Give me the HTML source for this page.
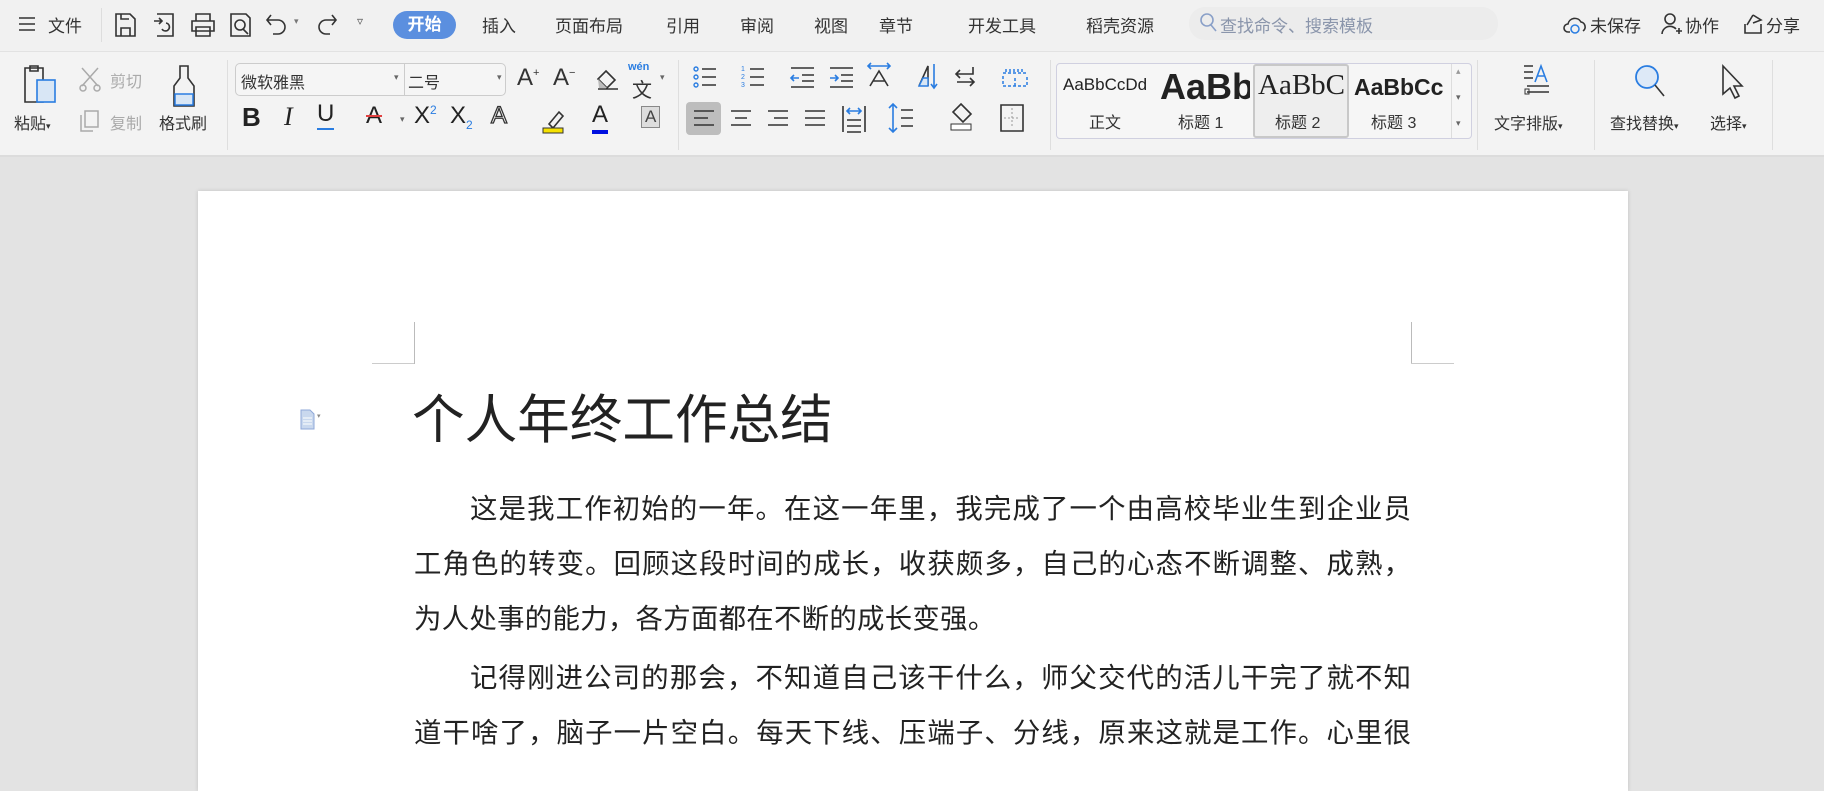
<!DOCTYPE html>
<html><head><meta charset="utf-8"><style>
*{margin:0;padding:0;box-sizing:border-box}
body{width:1824px;height:770px;overflow:hidden;position:relative;background:#e3e3e3;font-family:"Liberation Sans","Noto Sans CJK SC",sans-serif;color:#222}
.a{position:absolute;white-space:nowrap}
#top{position:absolute;left:0;top:0;width:1824px;height:52px;background:#f1f1f1;border-bottom:1px solid #e2e2e2}
#rib{position:absolute;left:0;top:52px;width:1824px;height:105px;background:#f3f3f3;border-bottom:2px solid #dcdcdc}
.tab{font-size:17px;top:12px;color:#333}
.lbl{font-size:16px;color:#333}
.sep{position:absolute;top:60px;width:1px;height:90px;background:#dedede}
svg{position:absolute;overflow:visible}
.ic{fill:none;stroke:#333;stroke-width:1.6}
.bl{stroke:#2a7de1}
#page{position:absolute;left:198px;top:191px;width:1430px;height:600px;background:#fff;box-shadow:0 0 4px rgba(0,0,0,.15)}
.l{position:absolute;left:216px;width:997px;font-size:27.4px;line-height:55px;height:55px;color:#222;text-align:justify;text-align-last:justify;white-space:nowrap;overflow:visible}
.in{left:272px;width:941px}
</style></head><body>
<div id="top">
<svg style="left:18px;top:16px" width="20" height="16"><path class="ic" d="M1 2h16M1 8h16M1 14h16"/></svg>
<span class="a tab" style="left:48px">文件</span>
<div class="a" style="left:101px;top:8px;width:1px;height:34px;background:#ddd"></div>
<svg style="left:114px;top:12px" width="24" height="26"><path class="ic" d="M2 2h14l5 5v17H2zM7 24v-8h9v8M7 2v5h8"/></svg>
<svg style="left:153px;top:12px" width="24" height="26"><path class="ic" d="M4 2h16v22H4M1 9h8M6 6l3 3-3 3M9 17a4 4 0 1 0 4-6"/></svg>
<svg style="left:190px;top:12px" width="26" height="26"><path class="ic" d="M6 9V2h14v7M2 9h22v10H2zM6 15h14v9H6z"/></svg>
<svg style="left:229px;top:12px" width="24" height="26"><path class="ic" d="M2 2h15l4 4v18H2z"/><circle class="ic" cx="11" cy="13" r="5"/><path class="ic" d="M14 17l5 5"/></svg>
<svg style="left:265px;top:12px" width="26" height="26"><path class="ic" d="M6 3L2 8l4 5M2 8h11a7 7 0 0 1 0 14H8"/></svg>
<span class="a" style="left:294px;top:16px;font-size:9px;color:#777">▾</span>
<svg style="left:316px;top:12px" width="24" height="26"><path class="ic" d="M16 3l4 5-4 5M20 8H10a7 7 0 0 0 0 14h4"/></svg>
<span class="a" style="left:357px;top:14px;font-size:12px;color:#555">▿</span>
<div class="a" style="left:393px;top:11px;width:63px;height:28px;border-radius:14px;background:#5b8fdf;color:#fff;font-size:17px;font-weight:bold;text-align:center;line-height:28px">开始</div>
<span class="a tab" style="left:482px">插入</span>
<span class="a tab" style="left:555px">页面布局</span>
<span class="a tab" style="left:666px">引用</span>
<span class="a tab" style="left:740px">审阅</span>
<span class="a tab" style="left:814px">视图</span>
<span class="a tab" style="left:879px">章节</span>
<span class="a tab" style="left:968px">开发工具</span>
<span class="a tab" style="left:1086px">稻壳资源</span>
<div class="a" style="left:1189px;top:7px;width:309px;height:33px;border-radius:16px;background:#ececec"></div>
<svg style="left:1199px;top:12px" width="20" height="22"><circle cx="8" cy="8" r="6" fill="none" stroke="#8aa0c8" stroke-width="1.6"/><path d="M12 13l5 6" stroke="#8aa0c8" stroke-width="1.6"/></svg>
<span class="a tab" style="left:1220px;color:#8a95ab">查找命令、搜索模板</span>
<svg style="left:1563px;top:12px" width="24" height="24"><path class="ic" d="M7 20H5a4 4 0 0 1 0-8 7 7 0 0 1 13-2 5 5 0 0 1 2 9"/><circle cx="12" cy="17" r="4" fill="none" stroke="#2a7de1" stroke-width="1.5"/></svg>
<span class="a tab" style="left:1590px">未保存</span>
<svg style="left:1661px;top:12px" width="22" height="24"><circle class="ic" cx="9" cy="7" r="5"/><path class="ic" d="M1 22a8 8 0 0 1 14-5M15 19h6M18 16v6"/></svg>
<span class="a tab" style="left:1685px">协作</span>
<svg style="left:1742px;top:12px" width="22" height="24"><path class="ic" d="M3 12v9h16v-9M11 3l-6 10M11 3l8 5-8 3"/></svg>
<span class="a tab" style="left:1766px">分享</span>
</div>
<div id="rib">
<svg style="left:23px;top:12px" width="36" height="40"><path class="ic" d="M2 4h18v34H2zM7 2h8v5H7z"/><rect x="14" y="16" width="18" height="22" fill="#d8e6f5" stroke="#2a7de1" stroke-width="1.6"/></svg>
<span class="a lbl" style="left:14px;top:58px">粘贴<small style="font-size:9px">▾</small></span>
<svg style="left:78px;top:14px" width="26" height="26"><path d="M4 2l16 18M20 2L4 20" stroke="#aaa" stroke-width="1.5"/><circle cx="5" cy="22" r="3" fill="none" stroke="#aaa" stroke-width="1.5"/><circle cx="19" cy="22" r="3" fill="none" stroke="#aaa" stroke-width="1.5"/></svg>
<span class="a lbl" style="left:110px;top:16px;color:#aaa">剪切</span>
<svg style="left:79px;top:57px" width="22" height="24"><path d="M6 2h13v16H6zM2 6v16h12" fill="none" stroke="#aaa" stroke-width="1.5"/></svg>
<span class="a lbl" style="left:110px;top:58px;color:#aaa">复制</span>
<svg style="left:170px;top:12px" width="28" height="44"><path class="ic" d="M10 2h8v12l6 8v20H4V22l6-8z"/><rect x="5" y="30" width="18" height="11" fill="#d8e6f5" stroke="#2a7de1" stroke-width="1.5"/></svg>
<span class="a lbl" style="left:159px;top:58px">格式刷</span>
<div class="sep" style="left:227px;top:8px"></div>
<div class="a" style="left:235px;top:11px;width:271px;height:33px;border:1px solid #ccc;border-radius:5px;background:#f5f5f5"></div>
<div class="a" style="left:404px;top:11px;width:1px;height:33px;background:#ccc"></div>
<span class="a lbl" style="left:241px;top:17px">微软雅黑</span>
<span class="a" style="left:394px;top:20px;font-size:9px;color:#666">▾</span>
<span class="a lbl" style="left:408px;top:17px">二号</span>
<span class="a" style="left:497px;top:20px;font-size:9px;color:#666">▾</span>
<span class="a" style="left:517px;top:12px;font-size:24px;color:#333">A<sup style="font-size:11px">+</sup></span>
<span class="a" style="left:553px;top:12px;font-size:24px;color:#333">A<sup style="font-size:11px">−</sup></span>
<svg style="left:595px;top:17px" width="26" height="22"><path class="ic" d="M11 2l9 9-8 8-9-9zM3 20h20"/><path d="M3 10l9 9 -8 0z" fill="#bbb"/></svg>
<span class="a" style="left:628px;top:9px;font-size:11px;color:#2a7de1;font-weight:bold">wén</span>
<span class="a" style="left:632px;top:22px;font-size:20px;color:#333">文</span>
<span class="a" style="left:660px;top:20px;font-size:9px;color:#666">▾</span>
<span class="a" style="left:242px;top:50px;font-size:26px;font-weight:bold">B</span>
<span class="a" style="left:284px;top:50px;font-size:26px;font-family:'Liberation Serif',serif;font-style:italic">I</span>
<span class="a" style="left:317px;top:48px;font-size:24px;border-bottom:2px solid #2a7de1;line-height:28px">U</span>
<span class="a" style="left:366px;top:50px;font-size:24px;line-height:28px;text-decoration:line-through;text-decoration-color:#e04040">A</span>
<span class="a" style="left:414px;top:50px;font-size:24px">X<sup style="font-size:12px;color:#2a7de1">2</sup></span>
<span class="a" style="left:450px;top:50px;font-size:24px">X<sub style="font-size:12px;color:#2a7de1">2</sub></span>
<span class="a" style="left:491px;top:50px;font-size:24px;color:#fff;-webkit-text-stroke:1.3px #333">A</span>
<svg style="left:541px;top:56px" width="24" height="26"><path class="ic" d="M8 16l10-12 4 4-10 12z"/><rect x="2" y="20" width="20" height="5" fill="#f5e100" stroke="#333"/></svg>
<span class="a" style="left:592px;top:48px;font-size:24px;line-height:30px;border-bottom:4px solid #0010e0">A</span>
<span class="a" style="left:641px;top:54px;font-size:17px;border:1px solid #888;background:#ddd;padding:0 3px;color:#444">A</span>
<span class="a" style="left:400px;top:62px;font-size:9px;color:#666">▾</span>
<div class="sep" style="left:678px;top:8px"></div>
<svg style="left:693px;top:14px" width="26" height="22"><circle cx="3" cy="3" r="2" fill="none" stroke="#2a7de1" stroke-width="1.4"/><circle cx="3" cy="11" r="2" fill="none" stroke="#2a7de1" stroke-width="1.4"/><circle cx="3" cy="19" r="2" fill="none" stroke="#2a7de1" stroke-width="1.4"/><path class="ic" d="M9 3h14M9 11h14M9 19h14"/></svg>
<svg style="left:741px;top:12px" width="26" height="24"><text x="0" y="7" font-size="7" fill="#2a7de1">1</text><text x="0" y="15" font-size="7" fill="#2a7de1">2</text><text x="0" y="23" font-size="7" fill="#2a7de1">3</text><path class="ic" d="M9 5h14M9 13h14M9 21h14"/></svg>
<svg style="left:790px;top:14px" width="26" height="22"><path class="ic" d="M1 2h23M12 9h12M12 15h12M1 21h23"/><path class="bl ic" d="M9 12H1M4 9l-3 3 3 3"/></svg>
<svg style="left:829px;top:14px" width="26" height="22"><path class="ic" d="M1 2h23M12 9h12M12 15h12M1 21h23"/><path class="bl ic" d="M1 12h8M6 9l3 3-3 3"/></svg>
<svg style="left:866px;top:10px" width="30" height="28"><path class="bl ic" d="M2 4h22M5 1l-3 3 3 3M21 1l3 3-3 3"/><path class="ic" d="M4 24l9-15 9 15M7 19h12"/></svg>
<svg style="left:916px;top:10px" width="26" height="30"><path class="ic" d="M3 24L12 4v20"/><path d="M3 24h9v-8h-5z" fill="#d8e6f5" stroke="#2a7de1" stroke-width="1.4"/><path class="bl ic" d="M18 2v24M15 22l3 4 3-4"/></svg>
<svg style="left:953px;top:14px" width="24" height="24"><path class="ic" d="M20 1v7H4M7 4L3 8l4 4M4 16h16M17 12l4 4-4 4"/></svg>
<svg style="left:1002px;top:16px" width="26" height="20"><path d="M1 5h24M4 1v4M8 1v4M12 1v4M16 1v4M20 1v4M1 8v10h24V8M13 10v8" fill="none" stroke="#2a7de1" stroke-width="1.5" stroke-dasharray="3 2"/></svg>
<div class="a" style="left:686px;top:50px;width:35px;height:33px;border-radius:4px;background:#bdbdbd"></div>
<svg style="left:693px;top:57px" width="24" height="20"><path class="ic" d="M1 2h20M1 9h14M1 16h20"/></svg>
<svg style="left:730px;top:57px" width="24" height="20"><path class="ic" d="M1 2h20M5 9h12M1 16h20"/></svg>
<svg style="left:767px;top:57px" width="24" height="20"><path class="ic" d="M1 2h20M7 9h14M1 16h20"/></svg>
<svg style="left:804px;top:57px" width="24" height="20"><path class="ic" d="M1 2h20M1 9h20M1 16h20"/></svg>
<svg style="left:841px;top:52px" width="26" height="30"><path class="ic" d="M2 2v26M24 2v26M6 16h14M6 22h14M6 28h14"/><path class="bl ic" d="M6 7h14M9 4L6 7l3 3M17 4l3 3-3 3"/></svg>
<svg style="left:887px;top:50px" width="30" height="34"><path class="bl ic" d="M6 2v28M2 6l4-4 4 4M2 26l4 4 4-4"/><path class="ic" d="M14 8h12M14 16h12M14 24h12"/></svg>
<svg style="left:949px;top:50px" width="26" height="32"><path class="ic" d="M12 2l10 10-8 8-10-10z"/><rect x="2" y="22" width="20" height="6" fill="#fff" stroke="#333"/></svg>
<svg style="left:1000px;top:52px" width="24" height="28"><path class="ic" d="M1 1h22v26H1z"/><path d="M12 4v20M4 14h16" stroke="#999" stroke-dasharray="2 2"/></svg>
<div class="sep" style="left:1050px;top:8px"></div>
<div class="a" style="left:1056px;top:11px;width:416px;height:76px;border:1px solid #d0d0e0;border-radius:4px;background:#f6f6f6"></div>
<div class="a" style="left:1253px;top:12px;width:96px;height:74px;border:2px solid #c8c8c8;border-radius:3px;background:#eee"></div>
<span class="a" style="left:1063px;top:23px;font-size:17px">AaBbCcDd</span>
<span class="a lbl" style="left:1089px;top:57px">正文</span>
<span class="a" style="left:1160px;top:14px;font-size:36px;font-weight:bold;width:90px;overflow:hidden">AaBb</span>
<span class="a lbl" style="left:1178px;top:57px">标题 1</span>
<span class="a" style="left:1258px;top:17px;font-size:29px;font-family:'Liberation Serif',serif;width:90px;overflow:hidden">AaBbC</span>
<span class="a lbl" style="left:1275px;top:57px">标题 2</span>
<span class="a" style="left:1354px;top:22px;font-size:23px;font-weight:bold;width:89px;overflow:hidden">AaBbCc</span>
<span class="a lbl" style="left:1371px;top:57px">标题 3</span>
<div class="a" style="left:1451px;top:12px;width:1px;height:74px;background:#ddd"></div>
<span class="a" style="left:1456px;top:14px;font-size:9px;color:#999">▴</span>
<span class="a" style="left:1456px;top:40px;font-size:9px;color:#666">▾</span>
<span class="a" style="left:1456px;top:66px;font-size:9px;color:#666">▾</span>
<div class="sep" style="left:1477px;top:8px"></div>
<svg style="left:1523px;top:12px" width="28" height="34"><path class="ic" d="M1 2h9M1 8h9M1 14h9M4 28h22M4 22h22"/><rect x="2" y="25" width="4" height="5" fill="none" stroke="#333"/><path class="bl ic" d="M12 18l6-16 6 16M14 12h8"/></svg>
<span class="a lbl" style="left:1494px;top:58px">文字排版<small style="font-size:9px">▾</small></span>
<div class="sep" style="left:1594px;top:8px"></div>
<svg style="left:1634px;top:12px" width="32" height="36"><circle cx="13" cy="13" r="11" fill="#dde9f7" stroke="#2a7de1" stroke-width="1.8"/><path class="ic" d="M21 21l9 11"/></svg>
<span class="a lbl" style="left:1610px;top:58px">查找替换<small style="font-size:9px">▾</small></span>
<svg style="left:1720px;top:12px" width="26" height="36"><path class="ic" d="M3 2l19 20h-8l5 10-4 2-5-10-7 6z"/></svg>
<span class="a lbl" style="left:1710px;top:58px">选择<small style="font-size:9px">▾</small></span>
<div class="sep" style="left:1772px;top:8px"></div>
</div>
<div id="page">
<div class="a" style="left:216px;top:131px;width:1px;height:42px;background:#bbb"></div>
<div class="a" style="left:174px;top:172px;width:42px;height:1px;background:#ccc"></div>
<div class="a" style="left:1213px;top:131px;width:1px;height:42px;background:#bbb"></div>
<div class="a" style="left:1213px;top:172px;width:43px;height:1px;background:#ccc"></div>
<svg style="left:102px;top:218px" width="24" height="22"><path d="M1 1h9l4 4v15H1z" fill="#c9d8ee" stroke="#8fa8d8"/><path d="M3 9h9M3 12h9M3 15h9" stroke="#fff"/><text x="17" y="9" font-size="7" fill="#888">▾</text></svg>
<div class="a" style="left:214px;top:200px;font-size:52.6px;line-height:60px;color:#222">个人年终工作总结</div>
<div class="l in" style="top:290px">这是我工作初始的一年。在这一年里，我完成了一个由高校毕业生到企业员</div>
<div class="l" style="top:345px">工角色的转变。回顾这段时间的成长，收获颇多，自己的心态不断调整、成熟，</div>
<div class="a" style="left:216px;top:400px;font-size:27.4px;line-height:55px;letter-spacing:0.3px">为人处事的能力，各方面都在不断的成长变强。</div>
<div class="l in" style="top:459px">记得刚进公司的那会，不知道自己该干什么，师父交代的活儿干完了就不知</div>
<div class="l" style="top:514px">道干啥了，脑子一片空白。每天下线、压端子、分线，原来这就是工作。心里很</div>
</div>
</body></html>
